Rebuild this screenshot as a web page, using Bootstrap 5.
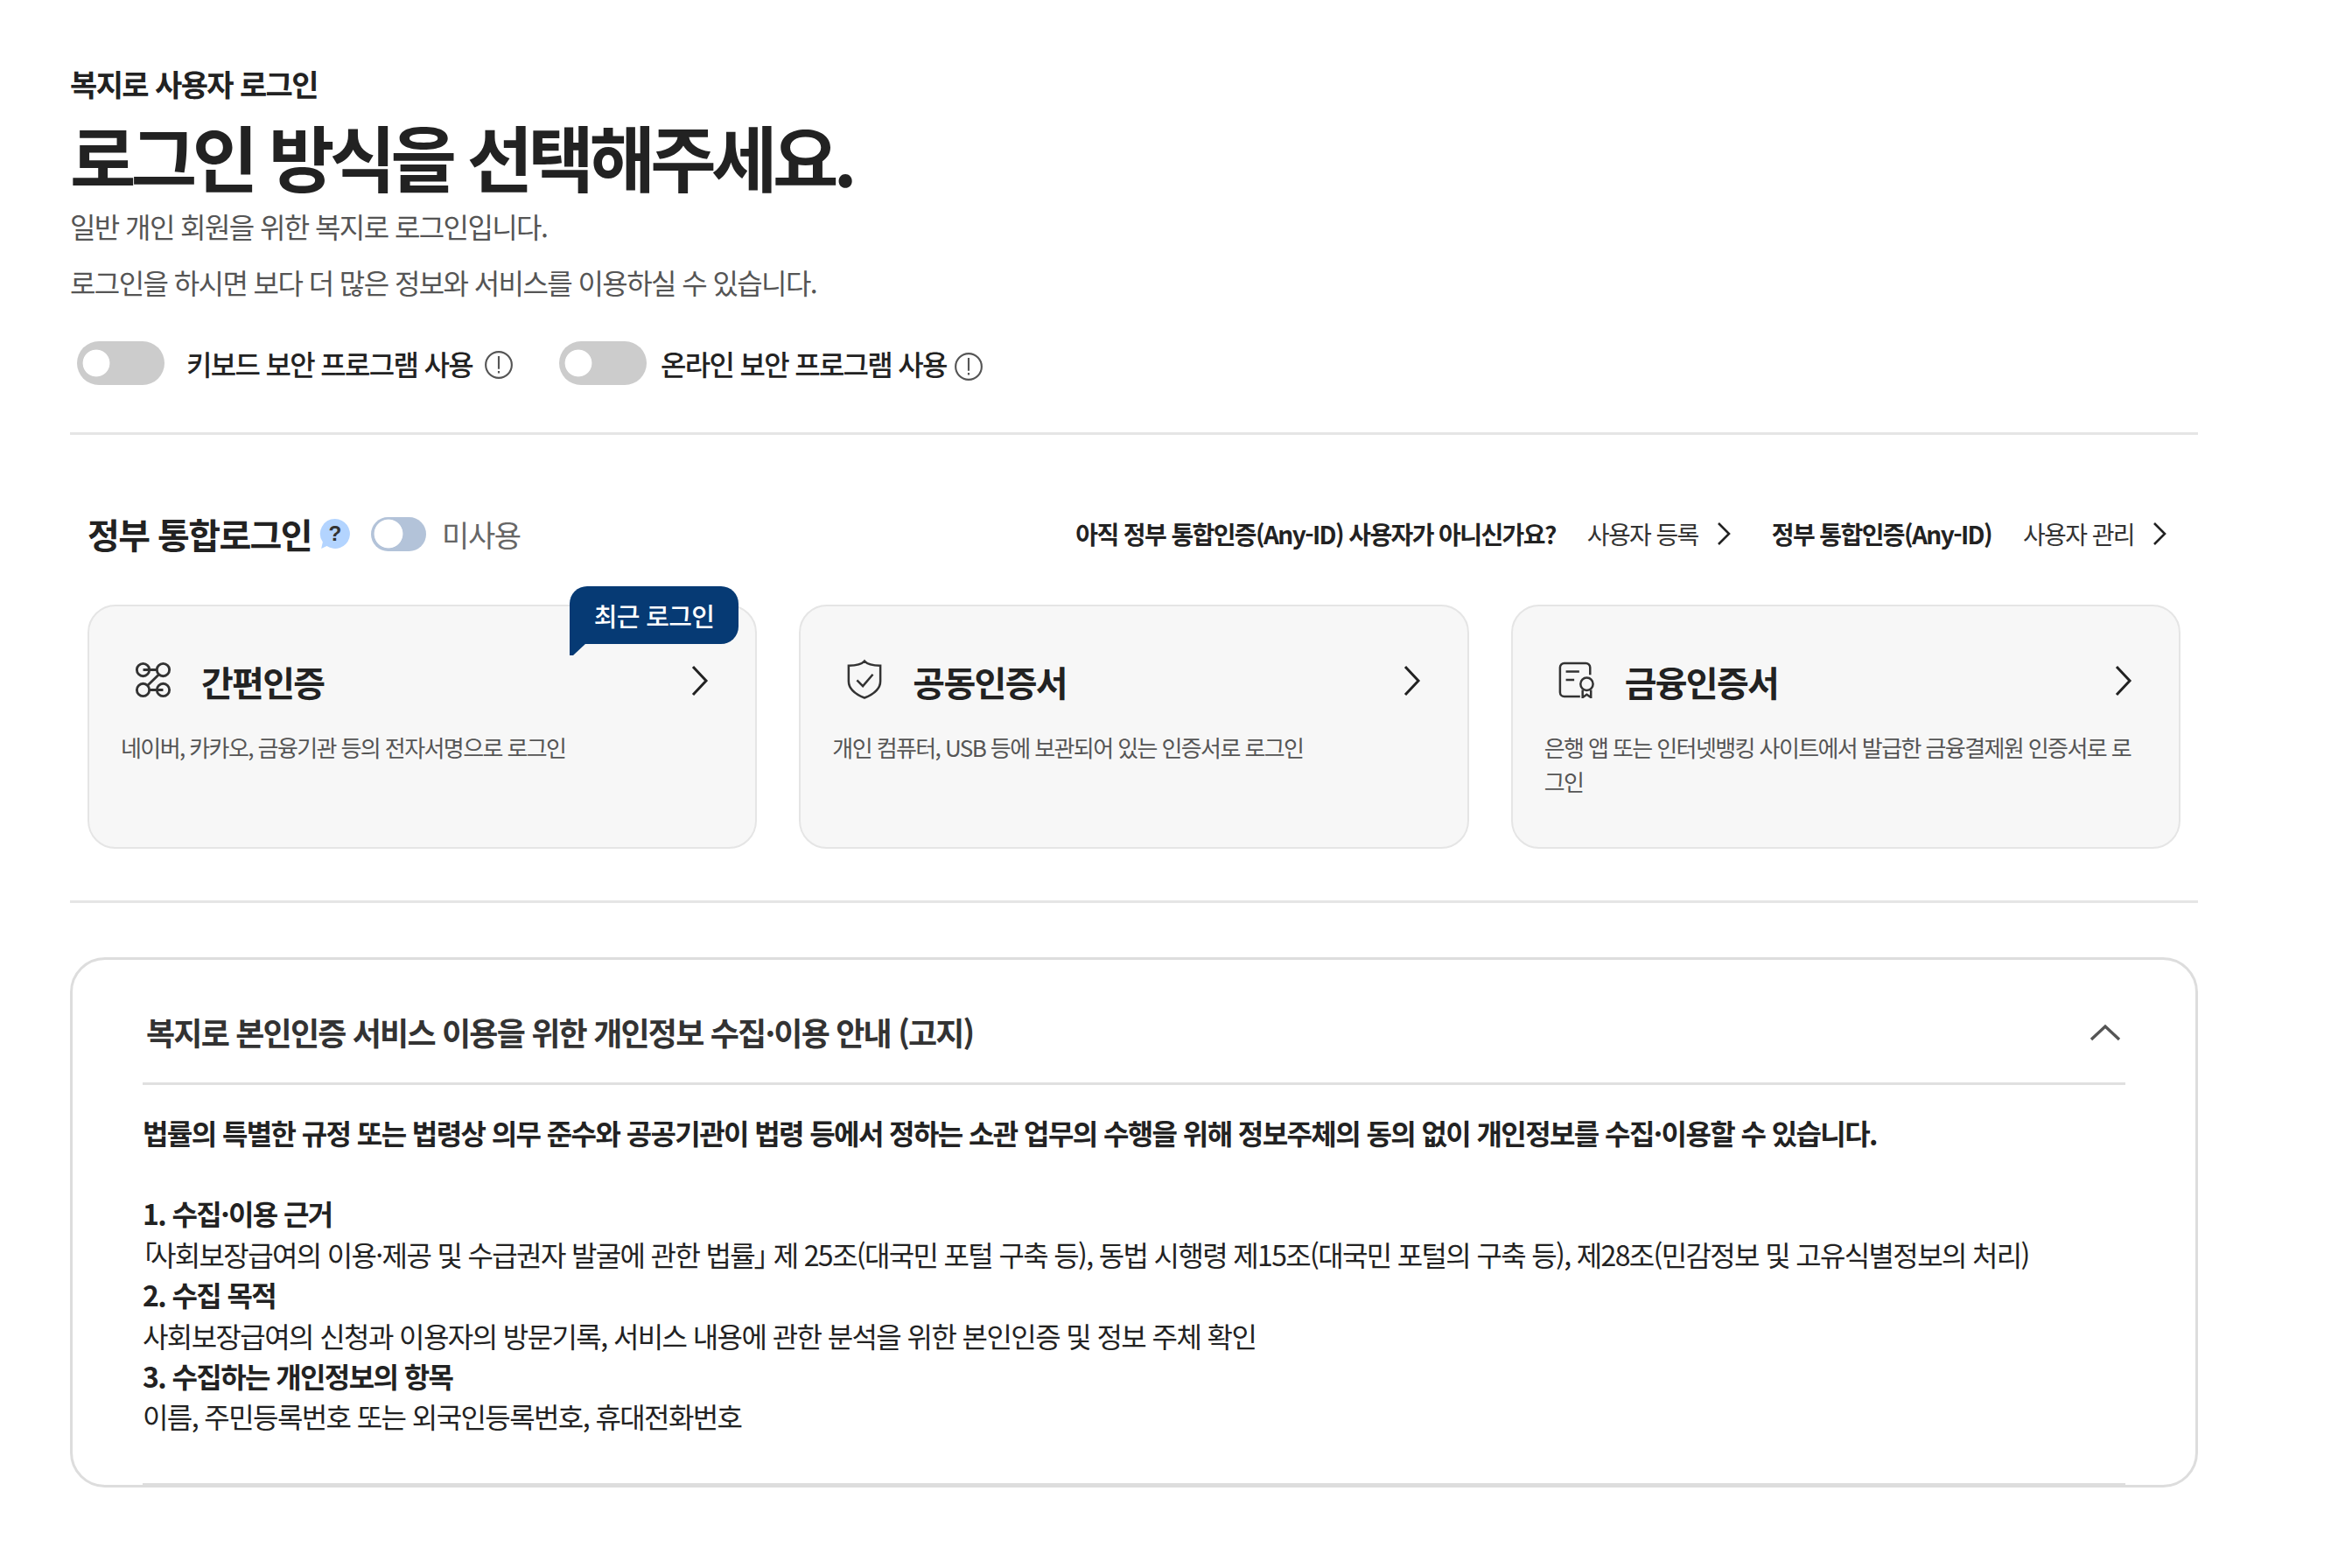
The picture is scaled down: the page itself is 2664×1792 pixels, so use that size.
<!DOCTYPE html>
<html lang="ko">
<head>
    <meta charset="UTF-8">
    <meta name="viewport" content="width=device-width, initial-scale=1.0">
    <title>복지로 사용자 로그인</title>
    <link href="https://cdn.jsdelivr.net/npm/bootstrap@5.3.3/dist/css/bootstrap.min.css" rel="stylesheet">
    <style>
        body { font-family: "Noto Sans CJK KR", "Noto Sans", sans-serif; color: #222; background: #fff; }
        .login-page { width: 2432px; margin-left: 80px; padding-top: 72px; }
        .eyebrow { font-size: 34px; line-height: 48px; font-weight: 700; letter-spacing: -1.6px; }
        .page-title { font-size: 82px; line-height: 96px; font-weight: 700; letter-spacing: -5.6px; margin: 10px 0 0; }
        .page-desc { font-size: 32px; line-height: 64px; color: #555; letter-spacing: -1.6px; margin: 0; }
        .security-row { margin-top: 36px; height: 50px; padding-left: 8px; }
        .security-item { font-size: 32px; font-weight: 500; letter-spacing: -1.7px; line-height: 48px; margin-left: 25px; }
        .security-item svg { margin-left: 13px; margin-top: 4px; }
        .switch-second { margin-left: 52px; }
        .security-item.label-second { margin-left: 16px; }
        .security-item.label-second svg { margin-left: 8px; margin-top: 8px; }
        .form-switch .form-check-input.big-switch { width: 100px; height: 50px; margin: 0; background-color: #ccc; border: 0; border-radius: 25px; background-image: radial-gradient(circle, #fff 15px, transparent 15.8px); background-size: 32px 32px; background-position: 6px center; background-repeat: no-repeat; float: none; }
        .form-switch .form-check-input.mini-switch { width: 63px; height: 39px; margin: 0 0 0 22px; background-color: #b3c3d9; border: 0; border-radius: 20px; background-image: radial-gradient(circle, #fff 16px, transparent 16.8px); background-size: 34px 34px; background-position: 3px center; background-repeat: no-repeat; float: none; }
        .rule-line { height: 3px; background: #e5e5e5; }
        .rule-top { margin-top: 54px; }
        .rule-bottom { margin-top: 59px; }
        .gov-section { padding: 0 20px; }
        .gov-head { height: 60px; margin-top: 83px; }
        .gov-title { font-size: 40px; font-weight: 700; letter-spacing: -1.6px; line-height: 60px; margin: 0; }
        .gov-state { font-size: 34px; color: #666; letter-spacing: -1.4px; margin-left: 18px; }
        .gov-links { font-size: 28px; letter-spacing: -1.6px; padding-right: 14px; }
        .gov-links b { font-weight: 700; }
        .gov-links b.links-second { margin-left: 45px; }
        .gov-links span { color: #333; margin-left: 36px; }
        .gov-links svg { margin-left: 19px; }
        .auth-row { gap: 48px; margin-top: 51px; }
        .auth-card { flex: 1 1 0; height: 279px; background: #f7f7f7; border: 2px solid #e5e5e5; border-radius: 32px; padding: 0 36px; color: #222; }
        .auth-head { height: 60px; margin-top: 56px; padding: 0 16px; }
        .auth-icon { width: 42px; height: 42px; flex: none; margin-bottom: 4px; }
        .auth-icon-tall { height: 47px; margin-bottom: 6px; }
        .auth-arrow { margin-bottom: 3px; }
        .auth-name { font-size: 40px; font-weight: 700; letter-spacing: -1.7px; line-height: 60px; margin: 0 0 0 34px; }
        .auth-desc { font-size: 26px; line-height: 39px; color: #555; letter-spacing: -1.6px; margin: 25px 0 0; word-break: break-all; }
        .recent-tag { position: absolute; top: -23px; left: 549px; width: 193px; height: 66px; padding-top: 2px; background: #063a74; color: #fff; font-size: 29px; font-weight: 500; letter-spacing: -0.7px; border-radius: 20px 20px 20px 0; }
        .recent-tag::after { content: ""; position: absolute; left: 0; top: 65px; width: 19px; height: 14px; background: #063a74; clip-path: polygon(0 0, 100% 0, 4px 100%, 0 100%); }
        .notice-box { margin-top: 62px; height: 606px; border: 3px solid #ddd; border-radius: 40px; padding: 0 80px; background: #fff; }
        .notice-head { height: 143px; padding: 26px 4px 0; border-bottom: 3px solid #e0e0e0; }
        .notice-title { font-size: 36px; font-weight: 700; letter-spacing: -1.8px; margin: 0; color: #333; }
        .notice-arrow { margin-right: 1px; }
        .notice-body { flex: 1 1 auto; font-size: 32px; line-height: 46.4px; letter-spacing: -1.6px; border-bottom: 4px solid #ddd; margin-bottom: -2px; padding-top: 31px; }
        .notice-body strong { font-weight: 700; }
        .notice-lead { margin-bottom: 46px; }
        .law-line { letter-spacing: -1.66px; }
        .law-mark { font-feature-settings: "palt"; }
        .law-open { letter-spacing: -7px; }
    </style>
</head>
<body>
    <div class="login-page">
        <div class="eyebrow">복지로 사용자 로그인</div>
        <h1 class="page-title">로그인 방식을 선택해주세요.</h1>
        <p class="page-desc">일반 개인 회원을 위한 복지로 로그인입니다.</p>
        <p class="page-desc">로그인을 하시면 보다 더 많은 정보와 서비스를 이용하실 수 있습니다.</p>

        <div class="security-row d-flex align-items-center">
            <div class="form-switch p-0 d-flex"><input class="form-check-input big-switch" type="checkbox" aria-label="키보드 보안 프로그램 사용"></div>
            <div class="security-item d-flex align-items-center">키보드 보안 프로그램 사용
                <svg width="34" height="34" viewBox="0 0 32 32" fill="none" stroke="#555" stroke-width="2"><circle cx="16" cy="16" r="14"/><path d="M16 6.500v14M16 22.500v2.500"/></svg>
            </div>
            <div class="form-switch p-0 d-flex switch-second"><input class="form-check-input big-switch" type="checkbox" aria-label="온라인 보안 프로그램 사용"></div>
            <div class="security-item d-flex align-items-center label-second">온라인 보안 프로그램 사용
                <svg width="34" height="34" viewBox="0 0 32 32" fill="none" stroke="#555" stroke-width="2"><circle cx="16" cy="16" r="14"/><path d="M16 6.500v14M16 22.500v2.500"/></svg>
            </div>
        </div>
        <div class="rule-line rule-top"></div>

        <div class="gov-section">
            <div class="gov-head d-flex align-items-center justify-content-between">
                <div class="d-flex align-items-center">
                    <h2 class="gov-title">정부 통합로그인</h2>
                    <svg class="ms-2" width="38" height="38" viewBox="0 0 36 36"><path d="M18 2a16 16 0 1 1-9 29.200L3 34l1.600-7A16 16 0 0 1 18 2z" fill="#b3d4ff"/><text x="18" y="26" text-anchor="middle" font-size="23" font-weight="700" fill="#333" font-family="Liberation Sans, sans-serif">?</text></svg>
                    <div class="form-switch p-0 d-flex"><input class="form-check-input mini-switch" type="checkbox" aria-label="미사용"></div>
                    <span class="gov-state">미사용</span>
                </div>
                <div class="gov-links d-flex align-items-center">
                    <b>아직 정부 통합인증(Any-ID) 사용자가 아니신가요?</b>
                    <span>사용자 등록</span>
                    <svg width="20" height="28" viewBox="0 0 20 28" fill="none" stroke="#222" stroke-width="2.600"><path d="M4 2l12 12L4 26"/></svg>
                    <b class="links-second">정부 통합인증(Any-ID)</b>
                    <span>사용자 관리</span>
                    <svg width="20" height="28" viewBox="0 0 20 28" fill="none" stroke="#222" stroke-width="2.600"><path d="M4 2l12 12L4 26"/></svg>
                </div>
            </div>

            <div class="auth-row d-flex">
                <a href="#" class="auth-card card text-decoration-none">
                    <div class="recent-tag d-flex align-items-center justify-content-center">최근 로그인</div>
                    <div class="auth-head d-flex align-items-center">
                        <svg class="auth-icon" viewBox="0 0 44 44" fill="none" stroke="#333" stroke-width="3"><circle cx="10" cy="10" r="7.500"/><circle cx="34" cy="10" r="7.500"/><circle cx="10" cy="34" r="7.500"/><circle cx="34" cy="34" r="7.500"/><path d="M10 10h16.500M29 15.500L15.500 28.500M17.500 34H34"/></svg>
                        <h3 class="auth-name">간편인증</h3>
                        <svg class="ms-auto auth-arrow" width="22" height="36" viewBox="0 0 22 36" fill="none" stroke="#222" stroke-width="3"><path d="M3 2l15 16L3 34"/></svg>
                    </div>
                    <p class="auth-desc">네이버, 카카오, 금융기관 등의 전자서명으로 로그인</p>
                </a>
                <a href="#" class="auth-card card text-decoration-none">
                    <div class="auth-head d-flex align-items-center">
                        <svg class="auth-icon auth-icon-tall" viewBox="0 0 44 48" fill="none" stroke="#333" stroke-width="2.600"><path d="M22 2c3 3.500 9 5.500 19 5.500V26C41 36 32 42 22 46 12 42 3 36 3 26V7.500C13 7.500 19 5.500 22 2z"/><path d="M13 25l7 7L32 18"/></svg>
                        <h3 class="auth-name">공동인증서</h3>
                        <svg class="ms-auto auth-arrow" width="22" height="36" viewBox="0 0 22 36" fill="none" stroke="#222" stroke-width="3"><path d="M3 2l15 16L3 34"/></svg>
                    </div>
                    <p class="auth-desc">개인 컴퓨터, USB 등에 보관되어 있는 인증서로 로그인</p>
                </a>
                <a href="#" class="auth-card card text-decoration-none">
                    <div class="auth-head d-flex align-items-center">
                        <svg class="auth-icon" viewBox="0 0 44 44" fill="none" stroke="#333" stroke-width="2.600"><path d="M38 16V7a5 5 0 0 0-5-5H7a5 5 0 0 0-5 5v30a5 5 0 0 0 5 5h19"/><path d="M9 12h16M9 22h10"/><circle cx="34" cy="27" r="7.500"/><path d="M29 34v9l5-3.500 5 3.500v-9"/></svg>
                        <h3 class="auth-name">금융인증서</h3>
                        <svg class="ms-auto auth-arrow" width="22" height="36" viewBox="0 0 22 36" fill="none" stroke="#222" stroke-width="3"><path d="M3 2l15 16L3 34"/></svg>
                    </div>
                    <p class="auth-desc">은행 앱 또는 인터넷뱅킹 사이트에서 발급한 금융결제원 인증서로 로그인</p>
                </a>
            </div>
        </div>
        <div class="rule-line rule-bottom"></div>

        <div class="notice-box d-flex flex-column">
            <div class="notice-head d-flex align-items-center justify-content-between">
                <h2 class="notice-title">복지로 본인인증 서비스 이용을 위한 개인정보 수집·이용 안내 (고지)</h2>
                <svg class="notice-arrow" width="36" height="20" viewBox="0 0 36 20" fill="none" stroke="#555" stroke-width="3.400"><path d="M2 18L18 3l16 15"/></svg>
            </div>
            <div class="notice-body">
                <div class="notice-lead"><strong>법률의 특별한 규정 또는 법령상 의무 준수와 공공기관이 법령 등에서 정하는 소관 업무의 수행을 위해 정보주체의 동의 없이 개인정보를 수집·이용할 수 있습니다.</strong></div>
                <div><strong>1. 수집·이용 근거</strong></div>
                <div class="law-line"><span class="law-mark law-open">「</span>사회보장급여의 이용·제공 및 수급권자 발굴에 관한 법률<span class="law-mark">」</span> 제 25조(대국민 포털 구축 등), 동법 시행령 제15조(대국민 포털의 구축 등), 제28조(민감정보 및 고유식별정보의 처리)</div>
                <div><strong>2. 수집 목적</strong></div>
                <div>사회보장급여의 신청과 이용자의 방문기록, 서비스 내용에 관한 분석을 위한 본인인증 및 정보 주체 확인</div>
                <div><strong>3. 수집하는 개인정보의 항목</strong></div>
                <div>이름, 주민등록번호 또는 외국인등록번호, 휴대전화번호</div>
            </div>
        </div>
    </div>
    <script src="https://cdn.jsdelivr.net/npm/bootstrap@5.3.3/dist/js/bootstrap.bundle.min.js"></script>
</body>
</html>
